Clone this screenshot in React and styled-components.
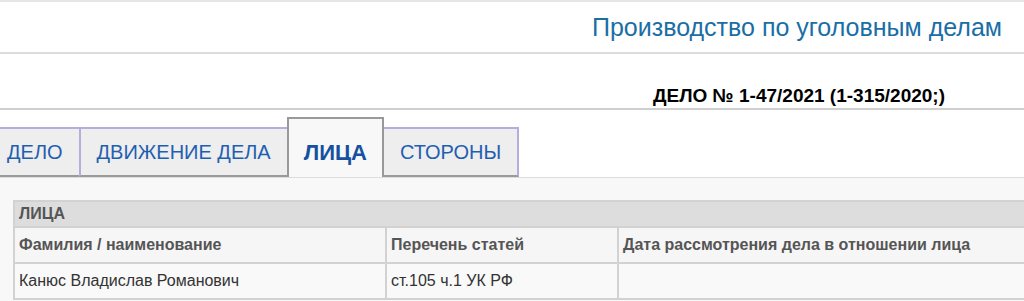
import React from 'react';
import styled, { createGlobalStyle } from 'styled-components';

const GlobalStyle = createGlobalStyle`
  html, body {
    margin: 0;
    padding: 0;
    background: #fff;
    overflow: hidden;
  }
  body {
    font-family: 'Liberation Sans', Arial, sans-serif;
  }
`;

const tabs = [
  { id: 'case', label: 'ДЕЛО' },
  { id: 'moves', label: 'ДВИЖЕНИЕ ДЕЛА' },
  { id: 'persons', label: 'ЛИЦА', active: true },
  { id: 'sides', label: 'СТОРОНЫ' },
];

function App() {
  return (
    <>
      <GlobalStyle />
      <Page>
        <Header>
          <Title>Производство по уголовным делам</Title>
        </Header>
        <CaseBar>
          <CaseNumber>ДЕЛО № 1-47/2021 (1-315/2020;)</CaseNumber>
        </CaseBar>
        <TabBar>
          {tabs.map((t) => (
            <Tab key={t.id} $active={t.active}>
              {t.label}
            </Tab>
          ))}
        </TabBar>
        <Content>
          <Table>
            <colgroup>
              <col style={{ width: 372 }} />
              <col style={{ width: 232 }} />
              <col />
            </colgroup>
            <thead>
              <tr>
                <SectionCell colSpan={3}>ЛИЦА</SectionCell>
              </tr>
              <tr>
                <HeadCell>Фамилия / наименование</HeadCell>
                <HeadCell>Перечень статей</HeadCell>
                <HeadCell>Дата рассмотрения дела в отношении лица</HeadCell>
              </tr>
            </thead>
            <tbody>
              <tr>
                <Cell>Канюс Владислав Романович</Cell>
                <Cell>ст.105 ч.1 УК РФ</Cell>
                <Cell></Cell>
              </tr>
            </tbody>
          </Table>
        </Content>
      </Page>
    </>
  );
}

export default App;

const Page = styled.div`
  width: 1024px;
  height: 301px;
  overflow: hidden;
  border-top: 2px solid #e6e6e6;
  box-sizing: border-box;
`;

const Header = styled.div`
  display: flex;
  justify-content: flex-end;
  align-items: center;
  height: 50px;
  padding-right: 22px;
  border-bottom: 2px solid #dcdcdc;
`;

const Title = styled.h1`
  margin: 0;
  font-size: 25px;
  font-weight: normal;
  color: #1a6ea6;
`;

const CaseBar = styled.div`
  display: flex;
  justify-content: flex-end;
  align-items: flex-end;
  height: 56px;
  padding: 0 79px 1px 0;
  border-bottom: 2px solid #cfcfcf;
  box-sizing: border-box;
`;

const CaseNumber = styled.div`
  font-size: 19px;
  font-weight: bold;
  color: #000;
`;

const TabBar = styled.div`
  display: flex;
  align-items: flex-end;
  height: 67px;
  margin-left: -9px;
`;

const Tab = styled.div`
  display: flex;
  align-items: center;
  box-sizing: border-box;
  height: ${({ $active }) => ($active ? '60px' : '50px')};
  padding: ${({ $active }) => ($active ? '10px 15px 0' : '0 16px')};
  margin-left: -2px;
  background: ${({ $active }) => ($active ? '#f8f8f8' : '#eeeeee')};
  border: 2px solid ${({ $active }) => ($active ? '#999999' : '#b5aedd')};
  border-bottom: ${({ $active }) => ($active ? 'none' : '2px solid #9a9a9a')};
  font-size: ${({ $active }) => ($active ? '22px' : '20px')};
  font-weight: ${({ $active }) => ($active ? 'bold' : 'normal')};
  color: ${({ $active }) => ($active ? '#1551a0' : '#1f5fb0')};
  position: relative;
  z-index: ${({ $active }) => ($active ? 1 : 0)};
`;

const Content = styled.div`
  background: #f8f8f8;
  border-top: 1px solid #dddddd;
  padding: 22px 0 0 13px;
  height: 200px;
`;

const Table = styled.table`
  width: 1100px;
  border-collapse: collapse;
  table-layout: fixed;
  border: 2px solid #d2d2d2;
`;

const SectionCell = styled.td`
  height: 24px;
  padding: 0 4px;
  background: #dddddd;
  border: 2px solid #d2d2d2;
  font-size: 16px;
  font-weight: bold;
  color: #555;
  text-align: left;
`;

const HeadCell = styled.th`
  height: 34px;
  padding: 0 4px;
  background: #f6f6f6;
  border: 2px solid #d2d2d2;
  font-size: 16px;
  font-weight: bold;
  color: #555;
  text-align: left;
`;

const Cell = styled.td`
  height: 34px;
  padding: 0 4px;
  background: #f9f9f9;
  border: 2px solid #d2d2d2;
  font-size: 16px;
  color: #333;
`;
